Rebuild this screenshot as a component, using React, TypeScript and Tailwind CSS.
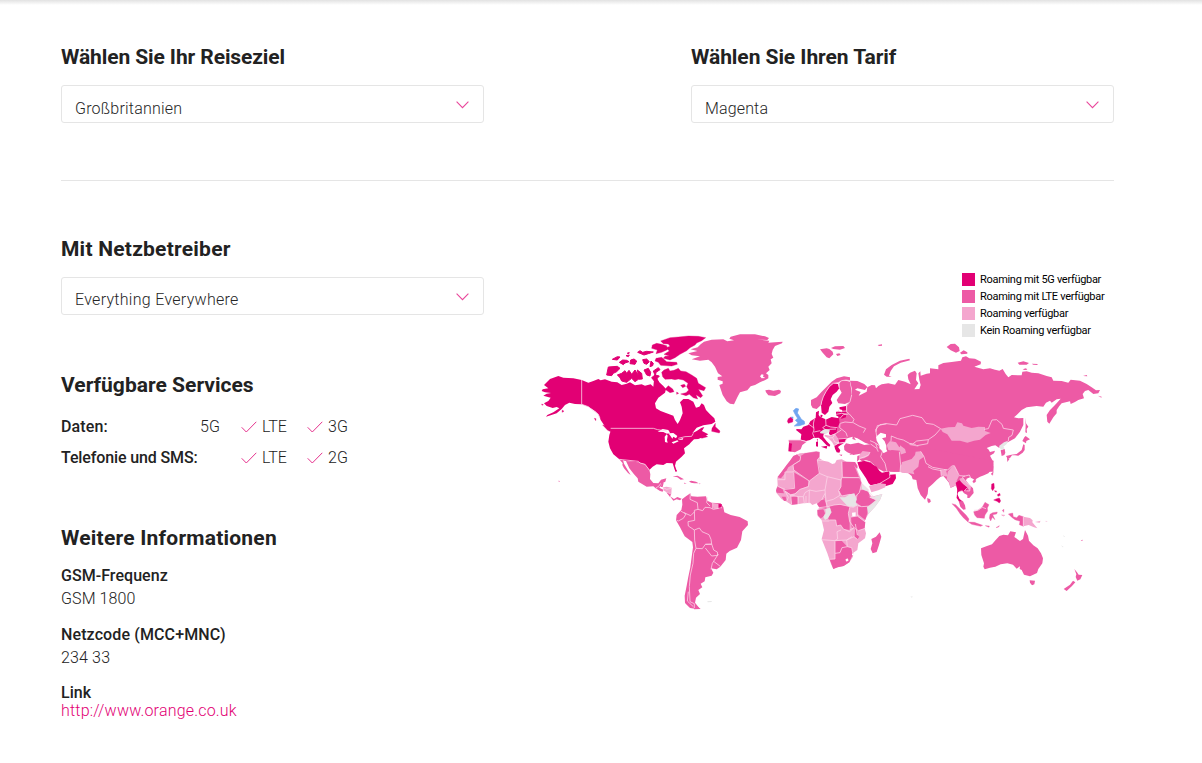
import React from "react";

const G5 = "#e20074";
const LTE = "#ed5aa5";
const ROAM = "#f4a6ce";
const NONE = "#e6e6e6";
const HOME = "#6fa5f0";
const SEA = "#ffffff";

type Shape = [fill: string, d: string, outline?: number];
type Region = { x: number; y: number; shapes: Shape[]; borders?: string };

const northAmerica: Region = {
  x: 0,
  y: 0,
  shapes: [
    [G5, "M85 153L100 158L130 160L155 165L175 173L190 168L205 162L212 166L225 163L245 170L262 172L275 180L290 176L300 172L315 181L335 178L345 182L362 178L370 185L372 165L380 158L388 172L400 183L408 192L405 203L385 218L375 235L378 250L392 258L410 265L430 272L435 285L443 297L450 285L458 265L455 245L450 232L460 222L475 222L490 230L498 248L508 245L515 235L522 240L528 255L540 268L553 280L556 290L545 297L520 301L500 308L487 325L500 318L515 308L523 306L516 318L535 328L520 336L505 342L492 343L483 352L478 358L462 370L465 385L455 395L438 410L435 422L441 440L434 434L428 415L410 414L400 420L380 418L368 425L358 435L345 418L325 412L288 408L268 403L250 388L240 370L235 350L238 330L242 318L232 312L222 300L212 285L205 268L195 258L175 245L155 238L135 237L118 233L105 240L95 252L80 265L62 271L48 275L52 270L70 262L88 250L80 246L68 249L50 243L42 235L55 228L62 218L40 212L50 206L63 204L45 202L35 198L38 193L55 190L42 180L60 162Z"],
    [G5, "M97 255L102 259L96 262ZM35 237L40 239L36 241ZM193 280L198 281L197 287ZM218 300L230 303L240 311L243 320L233 316ZM546 310L556 295L556 305L570 318L568 324L545 319ZM511 332L525 330L533 335L515 340ZM110 229L116 228L112 233Z", 1],
    [G5, "M235 126L262 124L270 130L260 140L250 145L245 152L230 150ZM262 150L275 145L285 137L290 145L297 136L305 148L315 135L325 150L322 135L335 145L337 162L325 163L315 170L305 160L290 172L275 168L270 158ZM247 103L262 95L270 96L262 105ZM268 112L278 105L290 106L297 110L285 114L280 119ZM288 92L298 90L295 95ZM292 84L298 83L295 87ZM302 105L312 102L320 108L315 118L300 116ZM323 82L330 77L338 82L350 79L370 81L355 86L342 90ZM338 104L350 102L358 110L350 118L342 115ZM360 125L363 108L370 115L368 122ZM342 135L355 130L362 142L360 153L350 150ZM370 138L385 128L390 134L378 142L376 153ZM365 158L375 150L388 153L380 162L386 172L376 172Z", 3],
    [G5, "M367 60L380 55L395 58L410 62L412 74L395 82L378 86L382 75L365 70ZM378 100L395 97L410 110L440 112L442 118L425 123L392 121L385 112L375 108ZM392 48L420 38L445 36L475 33L505 34L527 38L515 47L500 54L495 60L480 68L470 77L450 88L435 98L420 105L400 100L405 94L418 93L402 88L418 78L408 68L420 64L415 57L400 56Z", 1],
    [G5, "M395 142L402 135L415 130L420 138L432 136L445 130L452 138L468 140L485 150L500 160L505 175L527 188L522 197L505 193L518 212L512 218L498 209L503 222L490 218L478 208L468 212L452 207L468 203L476 195L470 185L474 175L460 165L445 162L435 164L425 162L405 163L398 155ZM405 193L415 182L428 192L432 200L420 203ZM440 201L446 205L440 208ZM452 181L463 178L467 184L458 188Z", 1],
    [SEA, "M383 320L398 312L415 315L420 323L411 326L400 321ZM404 335L410 328L413 332L411 345L413 353L405 351ZM415 325L430 324L442 333L438 340L430 335L427 341L421 332ZM425 352L442 346L446 349L430 356ZM443 344L460 339L458 344Z"],
    [LTE, "M288 408L325 412L345 418L358 435L361 448L360 462L370 474L385 475L393 464L409 460L406 470L398 474L392 484L388 488L377 490L370 484L350 485L325 470L323 460L312 448L298 430ZM268 403L279 405L282 416L302 450L294 444L282 430L277 420L278 415ZM428 454L443 452L462 463L452 464L442 457ZM477 469L484 467L498 470L506 475L493 475L483 473ZM462 473L470 475L463 476ZM507 476L511 475L510 478ZM85 467L90 468L87 471Z"],
    [LTE, "M377 490L388 488L400 494L398 500L390 498ZM409 502L423 508L420 516ZM420 514L432 522L442 516L455 521L450 526L440 523L430 527ZM396 475L401 473L398 486L392 486Z"],
    [ROAM, "M398 487L410 485L425 488L424 508L412 503L400 496L401 492Z"],
  ],
  borders: "M155 165V238L175 245L190 257L205 268L210 280M242 310H370L383 314L410 318M445 340L465 335L485 334L490 325M268 403L325 409L330 414L345 418L358 435M377 490L388 482L392 475M398 487L410 493L424 490",
};

const greenland: Region = {
  x: 390,
  y: 0,
  shapes: [
    [LTE, "M85 85L112 78L92 73L113 67L122 58L132 50L155 44L190 43L202 49L222 46L208 41L212 35L240 28L285 28L315 34L327 39L322 45L290 43L328 47L325 53L345 52L368 50L366 55L345 63L338 75L335 87L340 98L332 103L335 115L325 125L329 135L318 145L325 150L325 160L316 165L300 172L285 180L272 184L262 196L240 202L232 217L222 238L210 236L200 229L188 210L182 192L178 180L188 176L188 169L173 164L173 156L187 154L174 145L165 125L155 112L145 104L120 107L95 103L120 94L95 91Z"],
    [SEA, "M305 148L311 149L309 155L316 159L305 160L300 154Z"],
    [LTE, "M316 196L327 194L340 197L357 194L363 198L361 205L345 213L325 211L318 202Z"],
  ],
};

const northAsia: Region = {
  x: 1050,
  y: 15,
  shapes: [
    [LTE, "M-90 152L-68 153L-47 162L-38 171L-45 180L-68 175L-75 179L-58 186L-64 197L-55 193L-40 185L-38 172L-25 165L-15 166L-12 175L-5 168L5 163L25 160L45 164L55 150L75 155L92 163L85 148L83 135L90 128L105 122L110 130L108 150L115 160L103 178L118 177L122 165L118 150L115 130L121 124L122 137L140 131L150 130L150 115L175 118L175 106L190 99L215 96L243 92L247 82L258 79L268 85L285 86L303 95L302 103L283 110L310 118L330 115L345 119L358 122L368 117L377 132L385 142L395 135L425 136L427 125L440 124L455 128L475 130L500 138L515 142L520 152L545 153L565 158L572 149L600 152L620 162L635 172L648 181L660 180L655 190L640 192L625 180L615 183L608 192L612 205L595 210L585 216L572 222L570 214L545 220L538 228L530 240L530 250L520 262L508 281L502 275L500 255L510 240L525 225L542 206L530 208L515 218L510 212L498 218L490 230L470 228L440 232L425 240L410 255L402 262L415 265L430 264L430 285L420 305L405 325L390 333L372 342L357 353L346 346L335 348L320 354L325 358L330 366L345 362L342 370L330 377L338 392L341 410L340 425L30 425L-20 395L-50 350L-25 345L-45 338L-68 325L-78 322L-72 331L-83 327L-82 320L-98 325L-103 330L-130 320L-140 295L-125 260L-100 245L-100 225L-92 215L-85 195L-85 175Z"],
    [LTE, "M12 134L18 118L35 105L60 92L88 86L90 91L62 98L42 109L32 123L27 137L35 140L20 140ZM200 51L212 42L225 41L237 52L239 63L228 68L212 61ZM240 68L251 61L262 67L262 71L244 73ZM413 98L430 94L447 99L440 104L418 104ZM455 101L473 102L472 105L460 104ZM428 118L438 115L442 119L434 120ZM609 138L620 135L622 139ZM654 197L665 200L664 203ZM435 263L438 280L445 290L440 297L441 309L436 307L437 285ZM-7 45L6 43L6 47L-3 48Z"],
    [LTE, "M433 322L437 318L450 328L439 333L438 340L427 333ZM430 343L434 345L434 360L428 368L415 377L405 376L396 376L390 384L382 385L378 378L394 374L410 372L425 360ZM381 383L389 386L382 396ZM362 361L374 357L376 368L373 375L365 378Z"],
    [NONE, "M357 348L372 337L384 332L380 342L370 350L374 355L363 360Z"],
    [ROAM, "M182 296L205 292L225 291L232 277L246 280L250 287L275 294L295 290L315 291L315 303L332 309L317 315L300 329L282 332L262 338L240 332L215 332L202 313L188 306Z"],
    [SEA, "M-12 320L2 308L18 313L18 322L6 325L14 334L19 347L19 358L22 364L10 370L-2 360L-2 346L-10 332Z"],
    [ROAM, "M20 345L30 333L48 337L57 350L80 361L68 374L45 363L25 360Z"],
    [ROAM, "M88 340L105 341L120 354L132 365L120 371L107 365L92 364L90 351Z"],
    [ROAM, "M60 405L85 400L100 385L107 366L125 370L132 379L118 387L118 405L110 428L65 428Z"],
  ],
  borders: "M0 284L20 281L50 285L60 266L98 256L126 263L138 280L160 283L182 296L165 315L145 329L110 333L98 342L88 340L70 330L53 326L34 318L33 333M312 298L325 296L336 270L350 269L366 283L370 295L400 300L396 316L386 322L385 333M145 329L143 341L110 347M-10 320L-13 298L0 284M132 365L138 388L155 395L160 405L195 412L220 407L231 415M120 371L140 386M57 390L55 372L80 366L105 358M60 405L57 390",
};

const europe: Region = {
  x: 720,
  y: 45,
  shapes: [
    [LTE, "M150 28L170 25L178 27L188 35L190 43L178 55L170 52L158 38ZM183 24L195 19L220 18L225 24L210 29L190 27ZM198 42L208 40L212 45L202 48Z"],
    [LTE, "M123 180L140 172L155 155L170 140L185 125L200 115L222 109L240 112L240 122L228 120L215 122L205 128L190 130L178 140L168 155L160 170L155 185L153 195L140 207L128 204L123 195Z"],
    [G5, "M190 130L204 132L208 145L200 155L188 165L182 178L187 189L178 200L175 215L165 225L155 218L153 195L158 175L168 155L178 140Z"],
    [LTE, "M208 130L215 122L228 122L240 125L243 145L245 165L240 185L225 192L205 190L200 180L208 168L215 158L208 145Z"],
    [G5, "M138 217L147 212L146 225L150 230L165 237L167 239L185 231L207 235L209 250L202 262L200 278L182 286L177 282L178 270L165 280L160 284L160 291L170 304L181 315L178 320L169 315L155 300L146 293L130 294L120 300L108 303L92 299L94 283L78 270L80 267L94 268L100 260L115 255L121 244L130 238L137 234ZM208 202L228 198L229 213L228 232L215 236L198 226L198 216L205 212L215 217L217 210L209 208ZM153 320L172 317L170 326ZM138 306L144 304L144 320L138 319ZM140 299L144 296L143 303ZM152 224L158 225L156 232L151 230Z"],
    [NONE, "M150 276L159 270L165 267L179 268L178 276L167 282L151 280Z"],
    [LTE, "M194 282L214 270L228 278L235 290L228 297L205 298Z"],
    [ROAM, "M164 284L180 287L195 282L205 298L205 308L193 318L186 306L174 294L164 289Z"],
    [G5, "M205 297L230 295L225 307L207 309ZM193 317L208 310L222 310L212 315L204 321L211 331L208 338L200 337L195 326ZM207 344L217 344L215 347Z"],
    [LTE, "M56 300L92 300L110 305L97 315L92 328L75 337L65 335L66 310L57 309Z"],
    [G5, "M57 309L66 310L65 335L55 334Z"],
    [HOME, "M70 212L78 205L86 207L82 219L88 228L94 238L103 244L104 252L88 257L73 258L84 248L76 241L83 235L77 226Z", 2],
    [G5, "M55 236L63 231L69 237L68 246L55 250L52 244Z", 1],
    [HOME, "M63 230L70 230L70 236L65 235Z"],
    [LTE, "M222 318L228 310L242 313L265 308L283 315L305 312L320 318L331 328L330 345L304 350L290 345L270 341L250 345L232 337L223 330Z"],
  ],
  borders: "M245 165L240 185L230 198L230 215L238 222L252 238L248 247L267 258L287 266L280 278M211 250L225 246L248 248M211 234L220 224L236 222M210 250L209 263L228 278L232 290M195 282L214 270M133 237L130 252L132 270L128 280L133 293M117 253L132 264M167 238L168 256L158 263L165 268M168 256L182 261L202 263M151 272L132 276M178 268L198 267M56 300L92 300L110 305M200 215L229 213M198 223L215 220L229 222M205 297L230 295L225 307L205 309M193 317L205 309M174 294L188 293L194 306L205 308M188 293L195 282M302 312L320 325L330 345M300 302L312 307L330 318M317 310L322 325M318 275L322 257L350 251M153 195L155 185L160 170L168 155L178 140L190 130L205 128L215 122L228 120L240 122M205 128L208 145",
};

const africa: Region = {
  x: 720,
  y: 345,
  shapes: [
    [ROAM, "M60 62L70 48L90 40L110 38L140 33L150 36L148 55L160 62L175 65L187 72L195 70L200 60L215 58L230 65L255 66L262 75L265 87L258 82L272 115L275 130L290 148L297 160L305 170L337 162L330 180L315 200L295 222L285 240L283 262L288 280L285 295L265 310L262 330L250 338L249 350L238 367L221 378L203 382L190 387L183 372L172 340L160 310L155 297L162 270L155 240L143 228L142 212L150 202L140 190L127 195L120 188L100 190L82 193L65 195L50 185L35 178L20 160L18 148L23 137L22 115L35 95L50 75Z"],
    [LTE, "M60 62L70 48L82 43L92 50L90 60L71 72L55 82L45 100L33 115L22 112L35 95L50 75ZM92 48L105 40L138 35L148 37L148 52L142 60L148 85L148 100L118 123L105 115L71 90L69 75L90 62ZM71 97L115 122L115 138L90 148L75 160L62 163L45 153L45 146L72 145ZM217 65L255 66L262 78L260 86L252 75L267 112L217 110ZM215 113L267 113L275 130L268 158L255 170L240 163L215 168L206 152L213 140ZM266 151L280 150L295 155L300 172L320 180L303 198L275 200L258 187ZM263 200L293 199L292 220L286 240L263 222ZM243 231L262 228L286 246L284 265L265 272L245 262ZM178 198L192 195L212 194L240 200L235 220L239 245L239 270L220 267L212 255L200 258L197 240L178 240L174 234L185 217ZM155 180L165 178L160 170L167 188L170 206L148 203L141 192ZM142 210L160 208L165 220L160 230L152 235L143 225ZM62 172L82 169L84 192L65 194ZM18 152L23 139L38 148L42 160L20 158ZM35 170L47 170L50 182L42 183Z"],
    [LTE, "M195 304L215 302L232 320L245 323L249 342L238 367L221 378L203 382L190 387L179 358L195 357ZM329 277L334 290L327 315L320 336L308 340L302 327L307 310L304 297L318 290Z"],
    [NONE, "M208 172L225 172L240 163L253 160L260 178L257 187L262 195L250 201L232 198ZM276 131L297 151L292 154L275 147ZM295 170L305 172L337 162L330 180L315 200L295 222L291 202L318 180ZM166 207L180 203L184 217L174 235L165 240L160 230L167 220Z"],
    [SEA, "M246 218L257 217L257 228L247 230ZM226 359L232 355L236 361L230 365ZM246 341L250 339L251 345L246 346Z"],
    [LTE, "M256 252L262 266L262 285L268 290L262 298L254 290Z"],
    [LTE, "M296 45L322 38L332 28L345 45L365 30L390 32L396 60L393 95L370 95L355 92L342 95L325 86L310 73L300 64L285 60L278 65L268 58L270 48Z"],
    [ROAM, "M268 45L278 33L300 36L295 48L282 55L268 56ZM392 75L420 62L420 88L412 100L390 96Z"],
    [G5, "M262 67L285 62L300 66L310 74L320 80L328 92L336 98L350 95L357 94L360 104L377 103L378 115L368 132L348 138L330 130L302 136L296 130L288 115L277 98L268 85Z"],
    [ROAM, "M297 138L328 130L348 132L346 142L325 151L304 157Z"],
    [LTE, "M262 48L268 46L268 58L261 65ZM238 43L246 42L243 45Z"],
  ],
  borders: "M82 43L92 50L90 62L69 75L71 90L118 123L148 100L142 60L148 52M45 96L69 96L71 92M22 119L45 119L45 96M71 97L74 145L45 148L23 139M142 60L160 62M148 100L172 110L213 120L217 110L215 65M118 123L115 140L90 148L75 162L62 165L45 153M172 110L165 150L138 154L118 150L105 158L100 170L85 170L62 165M213 120L213 140L206 152L210 166L190 178L168 184L165 150M118 150L117 190M100 170L103 190M108 168L108 190M85 170L84 192M62 165L65 194M267 113H217M206 152L215 168L240 163L255 170L268 158L275 130L297 151M168 184L172 200L192 195L210 193L232 198L250 202L262 195L275 200L303 198L320 180L300 172M172 200L148 203L142 210M155 180L165 160M50 185L55 172L45 153M178 240L197 240L200 258L212 255L220 267L239 275L252 263L239 245L235 220L240 200M155 243H178M155 299L195 302L203 297L201 275L213 270M195 302L230 300L252 290L262 298M195 304V357L179 358M230 300L232 320L245 323L249 342M232 320L216 323L210 338L195 340M243 231L262 228L286 246M263 200L263 228M239 270L252 263L265 272L286 265M256 252L262 285M230 300L246 290M268 56L285 50L296 45L300 36M285 62L300 66M330 130L360 112L358 100M338 32L332 50L345 70L350 92M388 35L392 75L390 96M288 148L320 180",
};

const southAsia: Region = {
  x: 1110,
  y: 285,
  shapes: [
    [LTE, "M0 70L281 122L280 135L274 149L265 160L252 166L240 170L228 177L225 180L210 172L200 176L198 182L208 194L219 205L221 219L208 234L202 234L202 225L192 220L187 213L175 215L172 225L178 237L189 244L195 256L197 268L190 269L181 260L175 240L170 235L172 222L172 208L168 192L160 200L152 203L147 188L138 177L130 168L122 170L110 180L98 192L85 203L83 222L75 239L62 225L53 205L49 180L38 178L35 168L25 160L0 154Z"],
    [ROAM, "M0 128L35 117L45 105L47 95L62 94L72 110L58 120L55 140L40 153L43 163L28 160L0 155Z"],
    [ROAM, "M122 149L138 150L143 170L130 168L124 166ZM143 155L155 140L163 137L170 150L177 168L170 182L172 198L160 199L151 204L147 186L140 177ZM178 176L188 173L197 184L211 200L208 210L195 198L186 193Z"],
    [G5, "M167 188L178 181L190 193L203 203L201 213L190 214L186 209L175 215L172 222L178 236L185 244L177 244L170 233L172 210Z"],
    [ROAM, "M130 148L142 148L138 154ZM0 76L15 87L18 98L0 104Z"],
    [LTE, "M82 235L90 238L92 245L86 249L83 244ZM218 184L227 174L227 185L221 189ZM273 162L280 155L278 166ZM156 251L167 254L182 269L198 285L207 297L204 306L190 293L180 281L169 265ZM205 306L223 307L248 316L242 319L215 313ZM221 275L232 272L247 261L255 247L267 254L262 264L263 273L255 285L253 295L231 293L224 285ZM270 283L278 278L292 276L290 282L278 284L285 299L277 292L272 303L268 294ZM256 317L268 318L267 322ZM288 323L298 317L296 321ZM307 271L312 268L311 277ZM305 285L314 286L310 288ZM325 282L338 279L340 290L350 293L357 286L370 290L370 319L358 314L360 304L345 299L335 292Z", 1],
    [ROAM, "M370 290L390 294L398 301L397 307L412 325L402 322L386 315L370 319ZM405 306L421 303L424 297L419 308ZM438 302L443 306L436 304Z"],
    [G5, "M275 192L282 190L283 204L278 212L274 206ZM283 212L290 213L288 217ZM292 224L299 220L301 226L294 229ZM281 240L290 236L298 234L302 243L298 249L291 244Z", 1],
    [LTE, "M243 385L261 378L276 373L285 362L298 348L310 344L324 346L331 334L348 337L343 351L360 363L369 357L375 330L384 347L387 362L400 376L413 385L423 400L429 415L427 430L415 447L411 459L390 469L372 464L365 450L359 447L360 439L350 446L339 434L322 430L302 433L286 440L270 443L254 448L250 440L252 430L244 405ZM389 481L405 482L403 493L396 496L390 488ZM523 447L531 457L536 464L547 465L541 478L532 482L527 471L529 463ZM519 482L526 487L516 498L500 513L491 507L510 494ZM542 361L548 359L547 363Z"],
    [NONE, "M489 345L495 350L492 351ZM483 376L491 381L488 382ZM31 530L38 529L36 533Z"],
  ],
  borders: "M78 130L98 142L130 148L143 150L155 138L163 137L178 167L195 168L208 165L213 176M78 130L72 110L62 94M122 149L124 168M84 140L98 147L124 152M186 172L195 168M188 173L197 184L211 200L209 213L193 212L203 203M370 290V319M222 271L235 270L247 262L258 266M305 285L313 286",
};

const southAmerica: Region = {
  x: 390,
  y: 435,
  shapes: [
    [LTE, "M66 88L79 78L91 70L94 79L112 80L138 79L142 92L155 98L182 100L190 112L193 127L212 135L239 141L263 154L264 165L247 184L243 210L231 233L209 243L199 251L197 270L181 290L170 298L153 295L160 308L155 317L136 322L134 334L122 341L127 352L115 360L120 372L108 383L105 398L116 412L120 416L110 417L90 414L75 399L74 377L80 347L85 320L91 292L95 261L99 232L97 216L74 199L60 172L48 151L50 135L64 120L67 104Z"],
    [G5, "M174 102L186 103L181 117L174 115ZM45 0L50 0L49 6L45 4Z"],
    [ROAM, "M158 99L173 101L173 116L160 116Z"],
    [LTE, "M106 405L122 417L102 418Z"],
    [NONE, "M142 394L155 393L155 396L143 397Z"],
  ],
  borders: "M91 70L90 88L112 98L114 118L103 121L104 151L84 155L85 168L103 180L104 211L108 235L101 250L99 280L91 315L88 350L90 395L103 401V414M114 118L128 122L135 112L150 113L160 118L186 113M142 82L140 98L150 108M158 99V116M174 102V116M62 123L78 132L70 145L55 153L50 151M72 128L92 137L104 125M103 180L118 174L126 185L147 194L153 208L155 222L136 223L127 236L108 235M155 222L161 240L172 246L173 256L155 258L136 234M155 223L136 223M175 252L157 280L153 298M161 274L182 290M85 365L82 393L100 410",
};

const regions = [northAmerica, greenland, northAsia, europe, southAsia, africa, southAmerica];

function WorldMap() {
  return (
    <svg viewBox="0 0 1740 870" className="-mt-[14px] block h-[290px] w-[580px]" aria-label="Weltkarte">
      {regions.map((region, i) => (
        <g key={i} transform={`translate(${region.x} ${region.y})`}>
          {region.shapes.map(([fill, d, outline = 0], j) => (
            <path key={j} d={d} fill={fill} stroke={fill} strokeWidth={outline} />
          ))}
          {region.borders && (
            <path d={region.borders} fill="none" stroke="#fbd3e7" strokeWidth="2.4" strokeLinejoin="round" />
          )}
        </g>
      ))}
    </svg>
  );
}

function Heading({ children, className = "" }: { children: React.ReactNode; className?: string }) {
  return (
    <h2 className={`h-7 whitespace-nowrap text-[21px] font-bold leading-7 ${className}`}>
      {children}
    </h2>
  );
}

function Select({ value, className = "" }: { value: string; className?: string }) {
  return (
    <button
      type="button"
      className="mt-[14px] flex h-[38px] w-[423px] items-center justify-between rounded-[3px] border border-[#e5e5e5] bg-white pr-[14px] pl-[13px] text-left text-base font-light text-[#262626]"
    >
      <span className={`leading-6 ${className}`}>{value}</span>
      <svg viewBox="0 0 13 8" className="mt-[2px] h-2 w-[13px]" fill="none" stroke="#e9479b" strokeWidth="1.1">
        <path d="M.6.7 6.5 6.6 12.4.7" />
      </svg>
    </button>
  );
}

function Service({ label, available = true }: { label: string; available?: boolean }) {
  return (
    <span className="flex items-center font-light">
      {available && (
        <svg viewBox="0 0 16 12" className="mr-[5px] h-3 w-4" fill="none" stroke="#e5308c" strokeWidth="1">
          <path d="M.7 6.3 5.3 11 15.3.8" />
        </svg>
      )}
      {label}
    </span>
  );
}

const legend = [
  ["bg-[#e20074]", "Roaming mit 5G verfügbar"],
  ["bg-[#ed5aa5]", "Roaming mit LTE verfügbar"],
  ["bg-[#f4a6ce]", "Roaming verfügbar"],
  ["bg-[#e6e6e6]", "Kein Roaming verfügbar"],
];

export default function App() {
  return (
    <main className="h-[763px] w-[1202px] overflow-hidden bg-white font-['Roboto',sans-serif] text-[#222]">
      <div className="h-[5px] bg-linear-to-b from-[#e2e2e2] to-white" />
      <div className="w-[1114px] pt-[38px] pl-[61px]">
        <section className="flex h-[138px] justify-between border-b border-[#e5e5e5]">
          <div>
            <Heading className="tracking-[-0.1px]">Wählen Sie Ihr Reiseziel</Heading>
            <Select value="Großbritannien" className="pt-[10px] tracking-[0.2px]" />
          </div>
          <div>
            <Heading className="tracking-[-0.06px]">Wählen Sie Ihren Tarif</Heading>
            <Select value="Magenta" className="pt-[10px] tracking-[0.15px]" />
          </div>
        </section>

        <section className="flex gap-[46px] pt-[54px]">
          <div className="w-[423px] shrink-0">
            <Heading className="tracking-[0.23px]">Mit Netzbetreiber</Heading>
            <Select value="Everything Everywhere" className="pt-[8px] tracking-[0.29px]" />

            <Heading className="mt-14 tracking-[0.02px]">Verfügbare Services</Heading>
            <div className="mt-3 grid w-max grid-cols-[139px_41px_66px_50px] leading-[31px]">
              <span className="font-medium tracking-[0.15px]">Daten:</span>
              <Service label="5G" available={false} />
              <Service label="LTE" />
              <Service label="3G" />
              <span className="col-span-2 font-medium tracking-[-0.13px]">Telefonie und SMS:</span>
              <Service label="LTE" />
              <Service label="2G" />
            </div>

            <Heading className="mt-[51px] tracking-[0.22px]">Weitere Informationen</Heading>
            <dl className="mt-3 leading-[23px]">
              <dt className="font-medium tracking-[0.05px]">GSM-Frequenz</dt>
              <dd className="font-light tracking-[0.1px]">GSM 1800</dd>
              <dt className="mt-[13px] font-medium tracking-[0.12px]">Netzcode (MCC+MNC)</dt>
              <dd className="font-light tracking-[0.15px]">234 33</dd>
              <dt className="mt-[15px] font-medium leading-[18px]">Link</dt>
              <dd className="font-light leading-[18px] tracking-[0.19px] text-[#e20074]">
                <a href="#">http://www.orange.co.uk</a>
              </dd>
            </dl>
          </div>

          <div className="flex flex-col pt-[36px]">
            <ul className="ml-[432px] w-[152px] text-[11px] leading-[17px] tracking-[-0.3px] text-black">
              {legend.map(([color, label]) => (
                <li key={label} className="flex h-[17px] items-center gap-[5px] whitespace-nowrap">
                  <span className={`size-[13px] ${color}`} />
                  {label}
                </li>
              ))}
            </ul>
            <WorldMap />
          </div>
        </section>
      </div>
    </main>
  );
}
